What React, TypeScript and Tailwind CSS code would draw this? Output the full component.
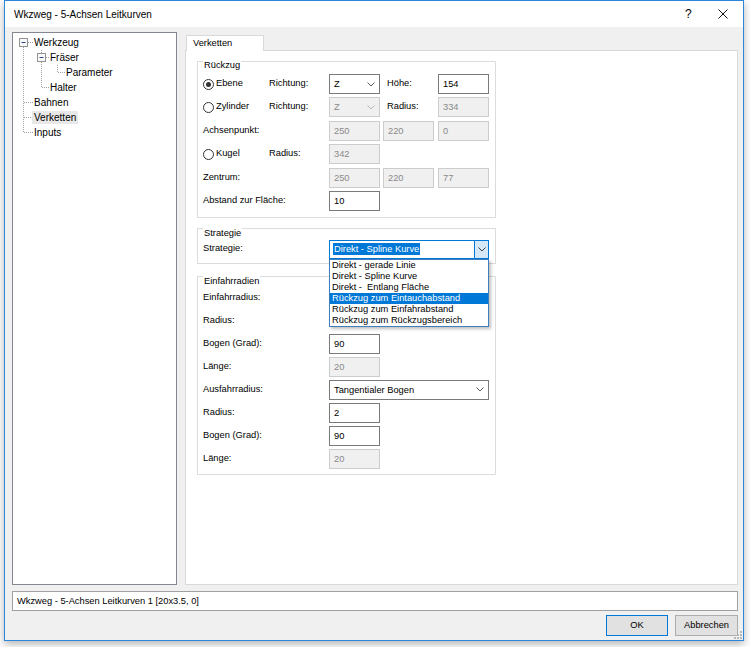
import React from 'react';

const font = "font-['Liberation_Sans',Arial,sans-serif]";

const strategies = [
  'Direkt - gerade Linie',
  'Direkt - Spline Kurve',
  'Direkt -  Entlang Fläche',
  'Rückzug zum Eintauchabstand',
  'Rückzug zum Einfahrabstand',
  'Rückzug zum Rückzugsbereich',
];

const Chevron = ({ color = '#5a5a5a' }: { color?: string }) => (
  <svg width="8" height="5" viewBox="0 0 8 5" className="shrink-0">
    <polyline points="0.5,0.5 4,4 7.5,0.5" fill="none" stroke={color} strokeWidth="1" />
  </svg>
);

const TextBox = ({ value, disabled, className = '' }: { value: string; disabled?: boolean; className?: string }) => (
  <div
    className={`h-[20px] w-[51px] border pl-[4px] leading-[18px] ${
      disabled ? 'border-[#cccccc] bg-[#f0f0f0] text-[#8a8a8a]' : 'border-[#7a7a7a] bg-white text-black'
    } ${className}`}
  >
    {value}
  </div>
);

const ComboBox = ({ value, disabled, className = '' }: { value: string; disabled?: boolean; className?: string }) => (
  <div
    className={`flex h-[20px] items-center border pl-[4px] pr-[4px] ${
      disabled ? 'border-[#cccccc] bg-[#f0f0f0] text-[#8a8a8a]' : 'border-[#7a7a7a] bg-white text-black'
    } ${className}`}
  >
    <span className="flex-1 leading-[18px]">{value}</span>
    <Chevron color={disabled ? '#b5b5b5' : '#5a5a5a'} />
  </div>
);

const Radio = ({ checked, label }: { checked?: boolean; label: string }) => (
  <div className="flex items-center gap-[2px]">
    <span className="flex h-[11px] w-[11px] items-center justify-center rounded-full border border-[#333333] bg-white">
      {checked && <span className="h-[5px] w-[5px] rounded-full bg-[#333333]" />}
    </span>
    <span>{label}</span>
  </div>
);

const Group = ({ title, children, className = '' }: { title: string; children: React.ReactNode; className?: string }) => (
  <fieldset className={`ml-[11px] w-[299px] min-w-0 border border-[#dcdcdc] px-[5px] ${className}`}>
    <legend className="px-[1px] pt-[8px] leading-[12px]">{title}</legend>
    {children}
  </fieldset>
);

const TreeLines = () => (
  <svg className="absolute inset-0" width="163" height="140" viewBox="0 0 163 140">
    <g stroke="#a0a0a0" strokeWidth="1" strokeDasharray="1 1" fill="none">
      <line x1="10.5" y1="14" x2="10.5" y2="100" />
      <line x1="15" y1="9.5" x2="20" y2="9.5" />
      <line x1="11" y1="69.5" x2="20" y2="69.5" />
      <line x1="11" y1="84.5" x2="20" y2="84.5" />
      <line x1="11" y1="99.5" x2="20" y2="99.5" />
      <line x1="28.5" y1="17" x2="28.5" y2="20" />
      <line x1="33" y1="24.5" x2="36" y2="24.5" />
      <line x1="28.5" y1="29" x2="28.5" y2="55" />
      <line x1="29" y1="54.5" x2="36" y2="54.5" />
      <line x1="44.5" y1="32" x2="44.5" y2="40" />
      <line x1="45" y1="39.5" x2="52" y2="39.5" />
    </g>
    <rect x="6.5" y="5.5" width="8" height="8" fill="#fafafa" stroke="#929292" />
    <line x1="8.5" y1="9.5" x2="12.5" y2="9.5" stroke="#2b4a8c" />
    <rect x="24.5" y="20.5" width="8" height="8" fill="#fafafa" stroke="#929292" />
    <line x1="26.5" y1="24.5" x2="30.5" y2="24.5" stroke="#2b4a8c" />
  </svg>
);

const Tree = () => (
  <div className="relative h-full w-[165px] shrink-0 border border-[#828790] bg-white pt-[2px] text-[10px] leading-[15px]">
    <TreeLines />
    <div className="relative">
      <div className="pl-[21px]">Werkzeug</div>
      <div className="pl-[37px]">Fräser</div>
      <div className="pl-[53px]">Parameter</div>
      <div className="pl-[37px]">Halter</div>
      <div className="pl-[21px]">Bahnen</div>
      <div className="pl-[19px]">
        <span className="bg-[#e8e8e8] px-[2px] py-[1px]">Verketten</span>
      </div>
      <div className="pl-[21px]">Inputs</div>
    </div>
  </div>
);

const Rueckzug = () => (
  <Group title="Rückzug" className="pb-[6px]">
    <div className="grid grid-cols-[66px_60px_51px_58px_51px] auto-rows-[20px] items-center gap-y-[3.4px] pt-[3px]">
      <Radio checked label="Ebene" />
      <span>Richtung:</span>
      <ComboBox value="Z" className="w-[51px]" />
      <span className="pl-[7px]">Höhe:</span>
      <TextBox value="154" />

      <Radio label="Zylinder" />
      <span>Richtung:</span>
      <ComboBox value="Z" disabled className="w-[51px]" />
      <span className="pl-[7px]">Radius:</span>
      <TextBox value="334" disabled />

      <span className="col-span-2">Achsenpunkt:</span>
      <TextBox value="250" disabled />
      <TextBox value="220" disabled className="ml-[3px]" />
      <TextBox value="0" disabled />

      <Radio label="Kugel" />
      <span>Radius:</span>
      <TextBox value="342" disabled />
      <span />
      <span />

      <span className="col-span-2">Zentrum:</span>
      <TextBox value="250" disabled />
      <TextBox value="220" disabled className="ml-[3px]" />
      <TextBox value="77" disabled />

      <span className="col-span-2">Abstand zur Fläche:</span>
      <TextBox value="10" />
      <span />
      <span />
    </div>
  </Group>
);

const Strategie = () => (
  <Group title="Strategie" className="relative z-10 mt-[1px] pb-[4px]">
    <div className="flex items-center pt-[1px]">
      <span className="w-[126px]">Strategie:</span>
      <div className="relative w-[160px]">
        <div className="flex h-[19px] items-stretch border border-[#0078d7] bg-white">
          <div className="flex flex-1 items-center pl-[3px]">
            <span className="bg-[#0078d7] px-[1px] leading-[12px] text-white">Direkt - Spline Kurve</span>
          </div>
          <div className="flex w-[14px] items-center justify-center border-l border-[#0078d7] bg-[#d4e8f8]">
            <Chevron color="#404040" />
          </div>
        </div>
        <div className="absolute left-0 top-full w-full border border-[#3f7fbf] bg-white shadow-[2px_2px_3px_rgba(0,0,0,0.25)]">
          {strategies.map((s, i) => (
            <div
              key={s}
              className={`h-[11px] whitespace-pre pl-[2px] leading-[11px] ${i === 3 ? 'bg-[#0078d7] text-white' : ''}`}
            >
              {s}
            </div>
          ))}
        </div>
      </div>
    </div>
  </Group>
);

const Einfahrradien = () => (
  <Group title="Einfahrradien" className="mt-[3px] pb-[5px]">
    <div className="grid grid-cols-[126px_160px] auto-rows-[20px] items-center gap-y-[3px] pt-[1px]">
      <span>Einfahrradius:</span>
      <span />
      <span>Radius:</span>
      <span />
      <span>Bogen (Grad):</span>
      <TextBox value="90" />
      <span>Länge:</span>
      <TextBox value="20" disabled />
      <span>Ausfahrradius:</span>
      <ComboBox value="Tangentialer Bogen" className="w-[160px]" />
      <span>Radius:</span>
      <TextBox value="2" />
      <span>Bogen (Grad):</span>
      <TextBox value="90" />
      <span>Länge:</span>
      <TextBox value="20" disabled />
    </div>
  </Group>
);

export default function App() {
  return (
    <div className={`h-[647px] w-[750px] bg-white pl-[4px] text-black ${font}`}>
      <div className="relative flex h-[641px] w-[740px] flex-col border border-[#2b88d8] bg-[#f0f0f0] shadow-[0_3px_8px_rgba(0,0,0,0.3)]">
        <div className="flex h-[26px] shrink-0 items-center bg-white pl-[9px] text-[10px]">
          <span className="flex-1">Wkzweg - 5-Achsen Leitkurven</span>
          <span className="w-[33px] text-[12px]">?</span>
          <svg width="10" height="10" viewBox="0 0 10 10" className="mr-[15px]">
            <path d="M0.5 0.5 L9.5 9.5 M9.5 0.5 L0.5 9.5" stroke="#111" strokeWidth="1" />
          </svg>
        </div>

        <div className="flex flex-1 flex-col pb-[4px] pl-[7px] pr-[5px] pt-[5px] text-[9.3px]">
          <div className="flex min-h-0 flex-1 gap-[8px]">
            <Tree />
            <div className="flex flex-1 flex-col pt-[3px]">
              <div className="relative z-10 -mb-px ml-[1px] h-[16px] w-[78px] border border-b-0 border-[#d9d9d9] bg-white pl-[6px] leading-[15px]">
                Verketten
              </div>
              <div className="flex-1 border border-[#d9d9d9] bg-white">
                <Rueckzug />
                <Strategie />
                <Einfahrradien />
              </div>
            </div>
          </div>

          <div className="mt-[6px] h-[20px] border border-[#a0a0a0] bg-white pl-[4px] leading-[18px]">
            Wkzweg - 5-Achsen Leitkurven 1 [20x3.5, 0]
          </div>

          <div className="mt-[4px] flex justify-end gap-[7px]">
            <button className="h-[21px] w-[62px] border border-[#0078d7] bg-[#e1e1e1]">OK</button>
            <button className="h-[21px] w-[63px] border border-[#adadad] bg-[#e1e1e1]">Abbrechen</button>
          </div>
        </div>

        <svg className="absolute bottom-[1px] right-[1px]" width="8" height="8" viewBox="0 0 8 8">
          <g fill="#b8b8b8">
            <rect x="6" y="0" width="2" height="2" />
            <rect x="3" y="3" width="2" height="2" />
            <rect x="6" y="3" width="2" height="2" />
            <rect x="0" y="6" width="2" height="2" />
            <rect x="3" y="6" width="2" height="2" />
            <rect x="6" y="6" width="2" height="2" />
          </g>
        </svg>
      </div>
    </div>
  );
}
